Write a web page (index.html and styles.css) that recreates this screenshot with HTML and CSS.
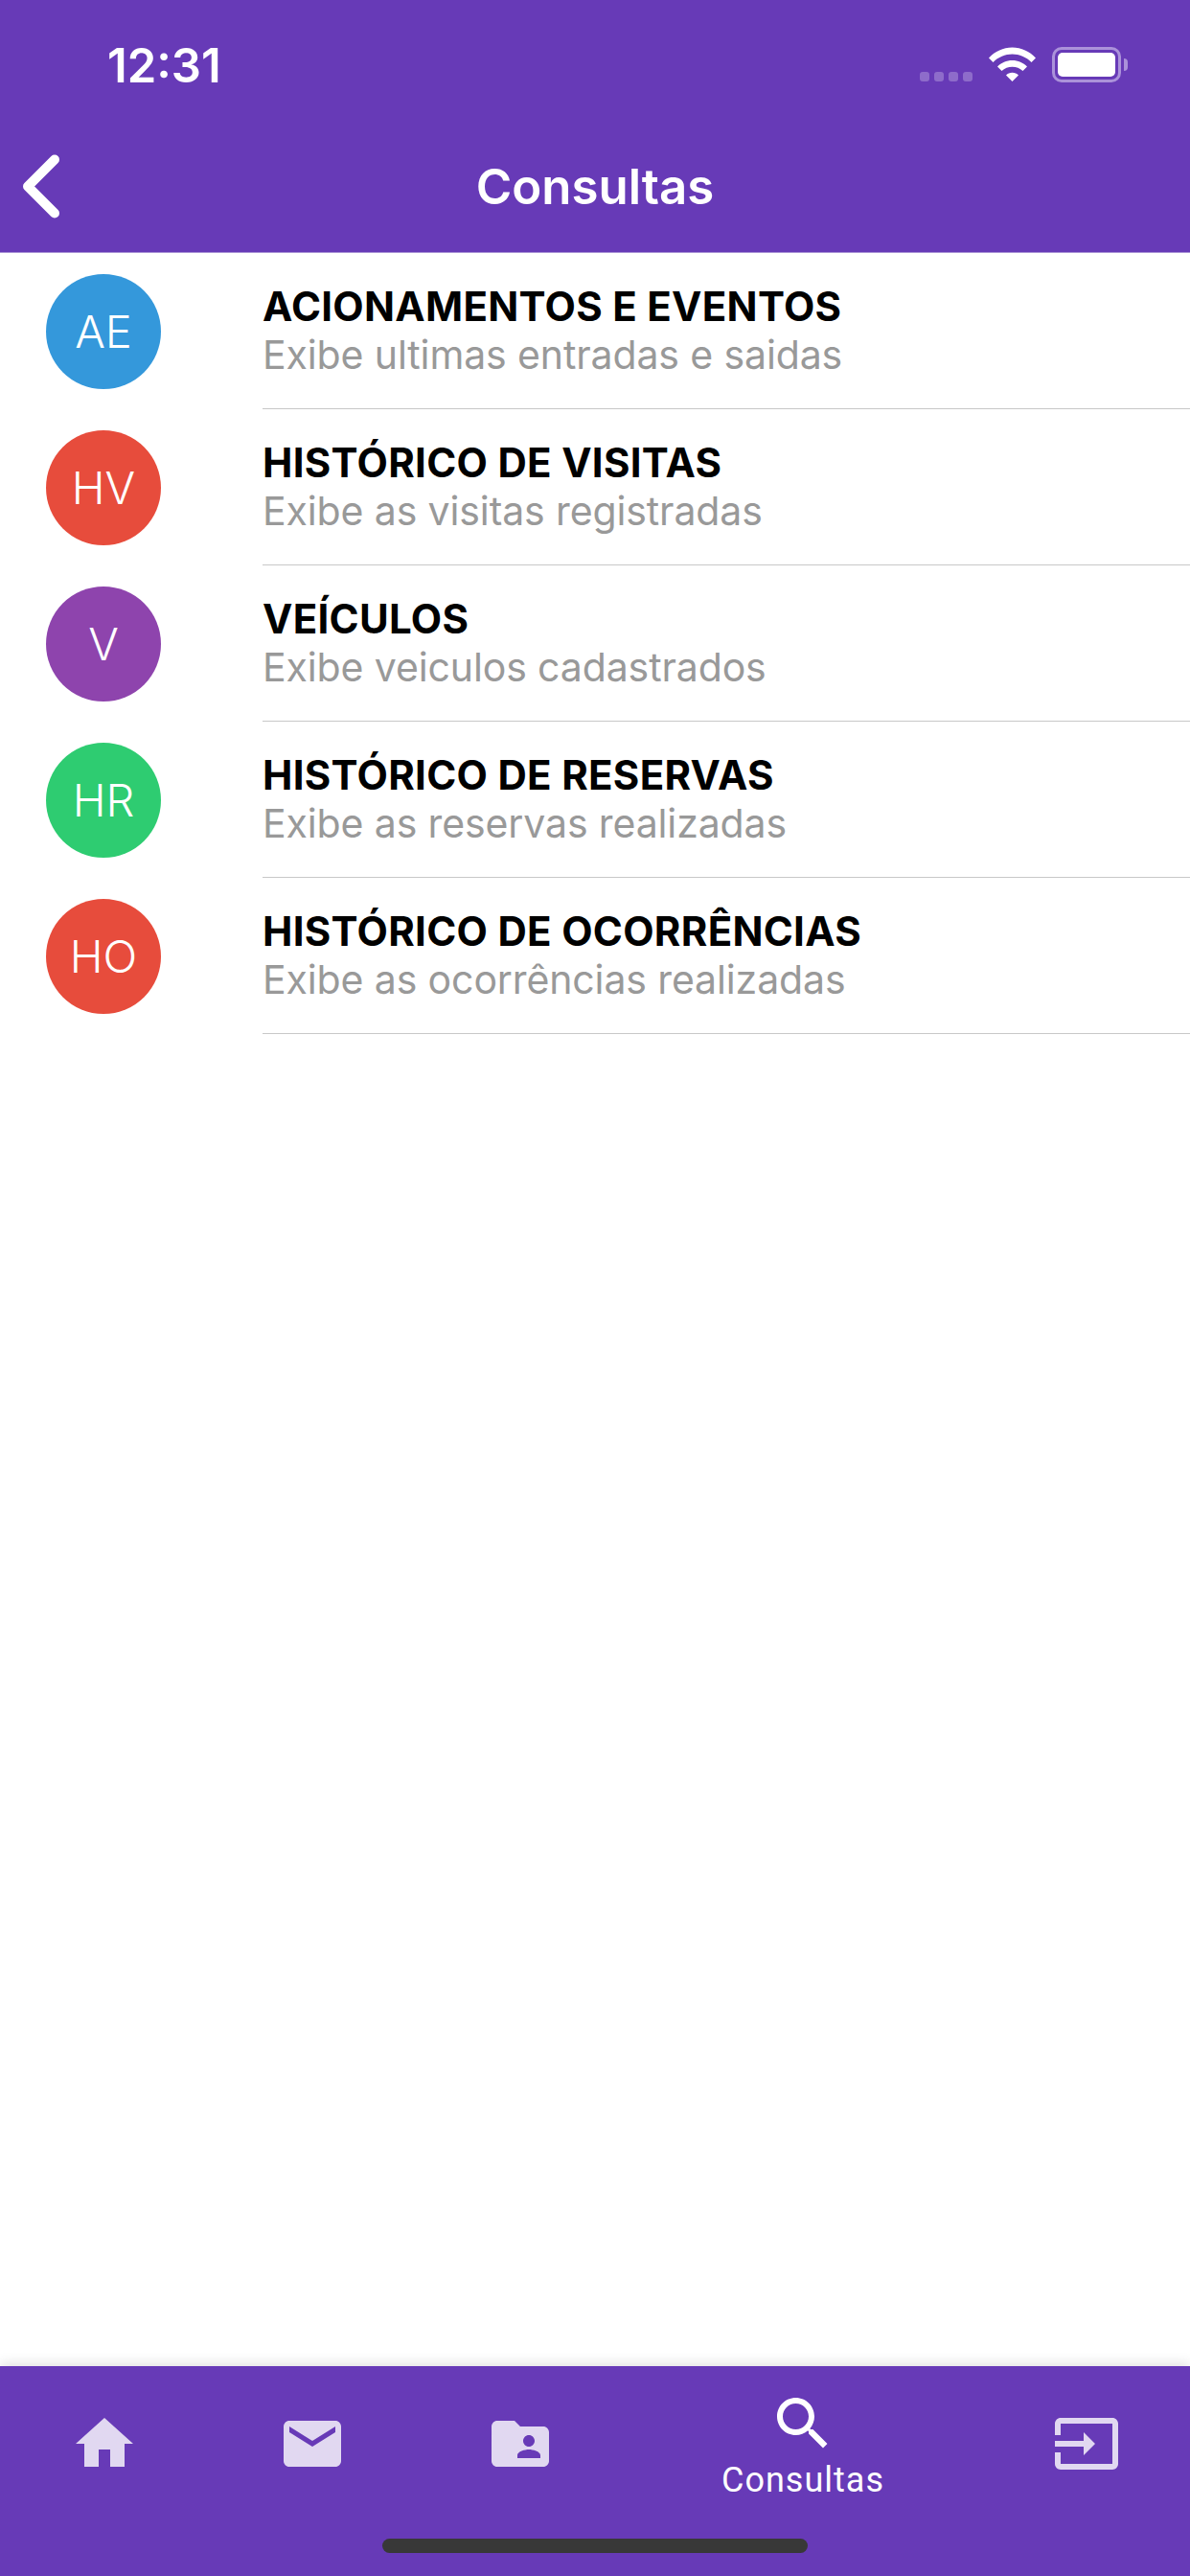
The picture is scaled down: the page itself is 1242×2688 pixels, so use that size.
FILE: index.html
```html
<!DOCTYPE html>
<html lang="pt-BR">
<head>
  <meta charset="UTF-8" />
  <title>Consultas</title>
  <link rel="stylesheet" href="styles.css">
</head>
<body>
  <div class="app">
    <header class="top">
      <div class="status">
        <span class="time">12:31</span>
        <div class="status-icons">
          <div class="signal"><i></i><i></i><i></i><i></i></div>
          <svg class="wifi" width="49" height="36" viewBox="0 0 49 36">
            <path fill="#fff" d="M0 11.500C6.500 4.500 15 0.500 24.500 0.500S42.500 4.500 49 11.500L44.500 16C39 10.500 32 7.500 24.500 7.500S10 10.500 4.500 16z"/>
            <path fill="#fff" d="M9 20.500C13 16.500 18.500 14 24.500 14S36 16.500 40 20.500L35.500 25C32.500 22.200 28.700 20.700 24.500 20.700S16.500 22.200 13.500 25z"/>
            <path fill="#fff" d="M18 29.500C19.700 27.800 22 26.800 24.500 26.800S29.300 27.800 31 29.500L24.500 36z"/>
          </svg>
          <div class="battery"><div class="battery-level"></div></div>
        </div>
      </div>
      <div class="navbar">
        <svg class="back" width="38" height="68" viewBox="0 0 38 68">
          <path d="M33 5.500 5 33.500 33 61.500" fill="none" stroke="#fff" stroke-width="10" stroke-linecap="round" stroke-linejoin="round"/>
        </svg>
        <h1 class="title">Consultas</h1>
      </div>
    </header>

    <main class="list">
      <div class="row">
        <div class="avatar blue">AE</div>
        <div class="row-text">
          <div class="row-title">ACIONAMENTOS E EVENTOS</div>
          <div class="row-sub">Exibe ultimas entradas e saidas</div>
        </div>
      </div>
      <div class="row">
        <div class="avatar red">HV</div>
        <div class="row-text">
          <div class="row-title">HISTÓRICO DE VISITAS</div>
          <div class="row-sub">Exibe as visitas registradas</div>
        </div>
      </div>
      <div class="row">
        <div class="avatar purple">V</div>
        <div class="row-text">
          <div class="row-title">VEÍCULOS</div>
          <div class="row-sub">Exibe veiculos cadastrados</div>
        </div>
      </div>
      <div class="row">
        <div class="avatar green">HR</div>
        <div class="row-text">
          <div class="row-title">HISTÓRICO DE RESERVAS</div>
          <div class="row-sub">Exibe as reservas realizadas</div>
        </div>
      </div>
      <div class="row">
        <div class="avatar red">HO</div>
        <div class="row-text">
          <div class="row-title">HISTÓRICO DE OCORRÊNCIAS</div>
          <div class="row-sub">Exibe as ocorrências realizadas</div>
        </div>
      </div>
    </main>

    <footer class="tabbar">
      <nav class="tabs">
        <div class="tab">
          <svg class="tab-icon" viewBox="0 0 24 24"><path d="M10 20v-6h4v6h5v-8h3L12 3 2 12h3v8z"/></svg>
        </div>
        <div class="tab">
          <svg class="tab-icon" viewBox="0 0 24 24"><path d="M20 4H4c-1.100 0-1.990.9-1.990 2L2 18c0 1.100.9 2 2 2h16c1.100 0 2-.9 2-2V6c0-1.100-.9-2-2-2zm0 4l-8 5-8-5V6l8 5 8-5v2z"/></svg>
        </div>
        <div class="tab">
          <svg class="tab-icon" viewBox="0 0 24 24"><path d="M20 6h-8l-2-2H4c-1.100 0-1.990.9-1.990 2L2 18c0 1.100.9 2 2 2h16c1.100 0 2-.9 2-2V8c0-1.100-.9-2-2-2zm-5 3c1.100 0 2 .9 2 2s-.9 2-2 2-2-.9-2-2 .9-2 2-2zm4 8h-8v-1c0-1.330 2.670-2 4-2s4 .67 4 2v1z"/></svg>
        </div>
        <div class="tab active">
          <svg class="tab-icon" viewBox="0 0 24 24"><path d="M15.500 14h-.79l-.28-.27C15.410 12.590 16 11.110 16 9.500 16 5.910 13.090 3 9.500 3S3 5.910 3 9.500 5.910 16 9.500 16c1.610 0 3.090-.59 4.230-1.570l.27.28v.79l5 4.990L20.490 19l-4.990-5zm-6 0C7.010 14 5 11.990 5 9.500S7.010 5 9.500 5 14 7.010 14 9.500 11.990 14 9.500 14z"/></svg>
          <span class="tab-label">Consultas</span>
        </div>
        <div class="tab">
          <svg class="tab-icon" viewBox="0 0 24 24"><path d="M21 3.010H3c-1.100 0-2 .9-2 2V9h2V4.990h18v14.030H3V15H1v4.010c0 1.100.9 1.980 2 1.980h18c1.100 0 2-.88 2-1.980v-14c0-1.110-.9-2-2-2zM11 16l4-4-4-4v3H1v2h10v3z"/></svg>
        </div>
      </nav>
      <div class="home-bar"></div>
    </footer>
  </div>
</body>
</html>
```

FILE: styles.css
```css
* {
  box-sizing: border-box;
}
body {
  margin: 0;
  background-color: #fff;
  font-family: Inter, "Liberation Sans", sans-serif;
}
.app {
  display: flex;
  flex-direction: column;
  width: 1242px;
  height: 2688px;
  overflow: hidden;
}

/* top bar */
.top {
  height: 264px;
  background-color: #673AB7;
  color: #fff;
  border-bottom: 1px solid #a993d6;
}
.status {
  display: flex;
  justify-content: space-between;
  align-items: flex-start;
  height: 132px;
  padding: 49px 72px 0 112px;
}
.time {
  font-size: 49px;
  font-weight: 600;
  line-height: 40px;
}
.status-icons {
  display: flex;
  align-items: flex-start;
}
.signal {
  display: flex;
  gap: 5px;
  margin: 26px 17px 0 0;
}
.signal i {
  display: block;
  width: 10px;
  height: 10px;
  border-radius: 3px;
  background-color: #8e6cca;
}
.wifi {
  display: block;
  margin-right: 17px;
}
.battery {
  position: relative;
  width: 72px;
  height: 37px;
  padding: 3px;
  border: 3px solid #ab92da;
  border-radius: 10px;
}
.battery::after {
  content: "";
  position: absolute;
  right: -10px;
  top: 9px;
  width: 4px;
  height: 13px;
  border-radius: 0 7px 7px 0;
  background-color: #ab92da;
}
.battery-level {
  height: 100%;
  border-radius: 5px;
  background-color: #fff;
}
.navbar {
  display: flex;
  align-items: center;
  justify-content: center;
  position: relative;
  height: 126px;
}
.back {
  position: absolute;
  left: 24px;
  top: 29px;
}
.title {
  margin: 0;
  font-size: 51px;
  font-weight: 600;
  line-height: 60px;
}

/* list */
.list {
  flex: 1;
}
.row {
  display: flex;
  height: 163px;
}
.avatar {
  flex: none;
  display: flex;
  align-items: center;
  justify-content: center;
  width: 120px;
  height: 120px;
  margin: 22px 106px 0 48px;
  padding-bottom: 2px;
  border-radius: 50%;
  color: #fff;
  font-size: 47px;
  font-weight: 300;
}
.blue { background-color: #3498DB; }
.red { background-color: #E74C3C; }
.purple { background-color: #8E44AD; }
.green { background-color: #2ECC71; }
.row-text {
  flex: 1;
  padding-top: 30px;
  border-bottom: 1px solid #c8c8c8;
}
.row-title {
  color: #000;
  font-size: 42px;
  font-weight: 700;
  line-height: 51px;
  letter-spacing: 0.3px;
}
.row-sub {
  color: #999;
  font-size: 41px;
  line-height: 51px;
  letter-spacing: -0.12px;
}

/* bottom tabs */
.tabbar {
  display: flex;
  flex-direction: column;
  height: 219px;
  background-color: #673AB7;
  box-shadow: 0 -3px 12px rgba(0, 0, 0, 0.12);
}
.tabs {
  display: grid;
  grid-template-columns: 217px 217px 217px 1fr 217px;
  flex: 1;
}
.tab {
  display: flex;
  flex-direction: column;
  align-items: center;
  padding-top: 45px;
  color: #fff;
}
.tab.active {
  padding-top: 24px;
}
.tab-icon {
  display: block;
  width: 72px;
  height: 72px;
  fill: #e1d8f1;
}
.active .tab-icon {
  fill: #fff;
}
.tab-label {
  font-family: Roboto, sans-serif;
  font-size: 36px;
  line-height: 47px;
  letter-spacing: 1px;
}
.home-bar {
  width: 444px;
  height: 15px;
  margin: 0 auto 24px;
  border-radius: 8px;
  background-color: #383838;
}
```
